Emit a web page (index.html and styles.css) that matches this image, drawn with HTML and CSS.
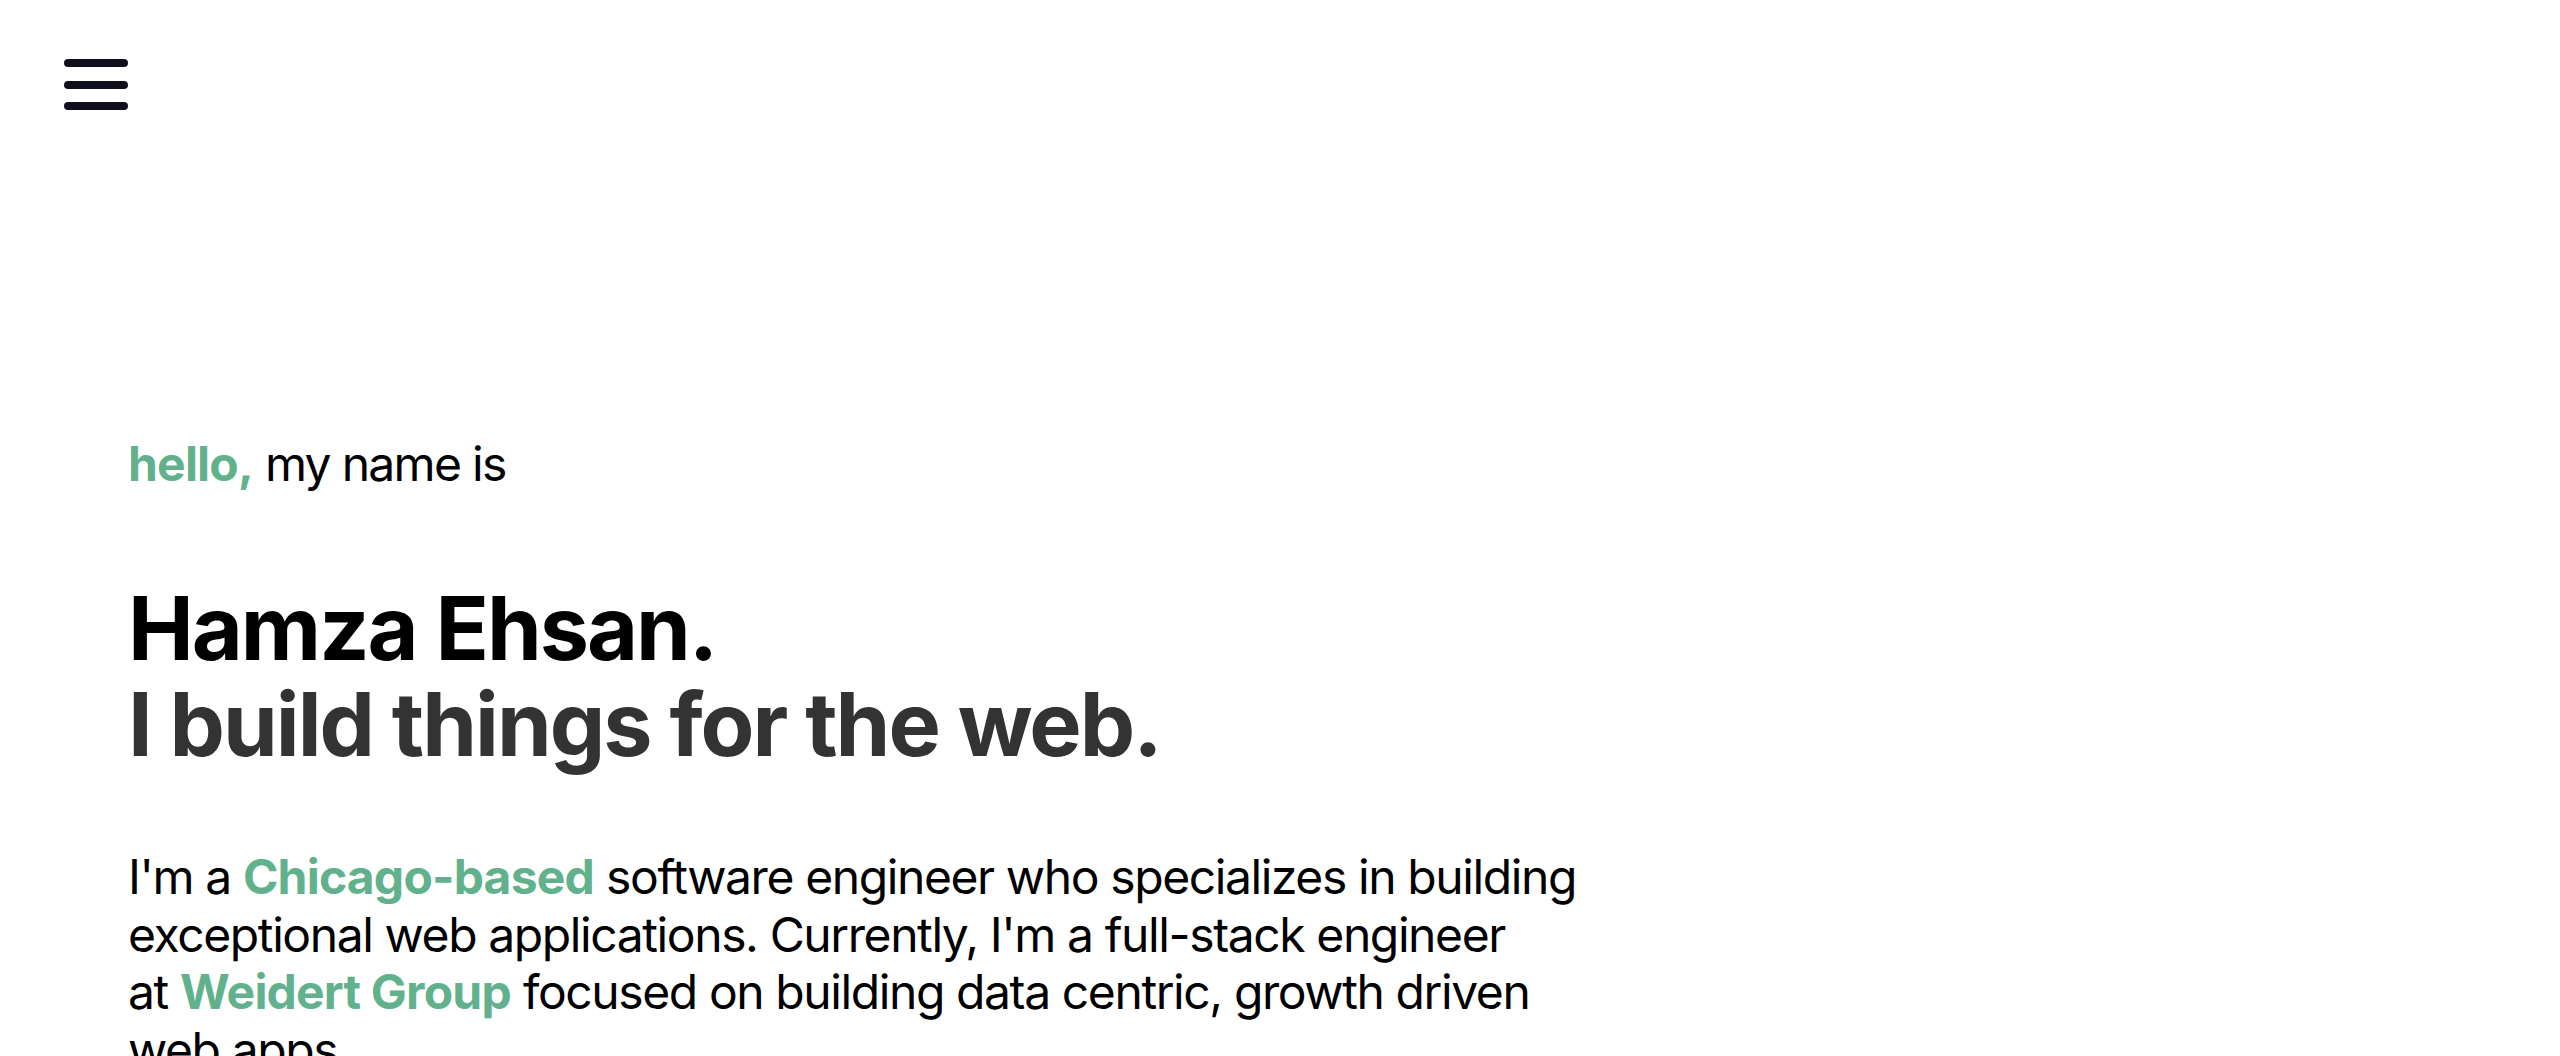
FILE: index.html
```html
<!DOCTYPE html>
<html lang="en">
<head>
<meta charset="utf-8">
<title>Hamza Ehsan</title>
<link rel="stylesheet" href="styles.css">
</head>
<body>
<header class="topbar">
  <button class="menu-btn" aria-label="Open menu">
    <svg class="menu-icon" width="64" height="51" viewBox="0 0 64 51" fill="none" stroke="#0f0f1e" stroke-width="8" stroke-linecap="round">
      <line x1="4" y1="4" x2="60" y2="4"/>
      <line x1="4" y1="26" x2="60" y2="26"/>
      <line x1="4" y1="47" x2="60" y2="47"/>
    </svg>
  </button>
</header>
<main class="hero">
  <p class="greeting"><span class="accent">hello,</span> my name is</p>
  <h1 class="title">
    <span class="name">Hamza Ehsan.</span>
    <span class="tagline">I build things for the web.</span>
  </h1>
  <p class="intro">I'm a <a class="accent" href="#">Chicago-based</a> software engineer who specializes in building exceptional web applications. Currently, I'm a full-stack engineer <span class="nowrap">at <a class="accent" href="#">Weidert Group</a></span> focused on building data centric, growth driven web apps.</p>
</main>
</body>
</html>
```

FILE: styles.css
```css
html, body {
  margin: 0;
  padding: 0;
  background: #ffffff;
}

body {
  font-family: Inter, "Noto Sans", "Liberation Sans", sans-serif;
  color: #000000;
}

.topbar {
  display: flex;
  padding: 59px 0 0 64px;
}

.menu-btn {
  border: 0;
  background: none;
  padding: 0;
  margin: 0;
  display: block;
  cursor: pointer;
}

.menu-icon {
  display: block;
}

.hero {
  display: flex;
  flex-direction: column;
  align-items: flex-start;
  padding: 325px 0 0 128px;
}

.greeting {
  margin: 0;
  font-size: 48px;
  line-height: 57.6px;
  font-weight: 400;
  letter-spacing: -1.7px;
}

.accent {
  color: #61b28c;
  font-weight: 700;
  text-decoration: none;
  letter-spacing: -0.8px;
}

.title {
  margin: 87px 0 0 0;
  font-size: 88px;
  line-height: 96.8px;
  font-weight: 700;
  letter-spacing: -2px;
  display: flex;
  flex-direction: column;
}

.name {
  color: #000000;
}

.tagline {
  color: #333333;
}

.intro {
  margin: 75px 0 0 0;
  max-width: 1480px;
  font-size: 48px;
  line-height: 57.6px;
  font-weight: 400;
  letter-spacing: -1.4px;
}

.nowrap {
  white-space: nowrap;
}
```
